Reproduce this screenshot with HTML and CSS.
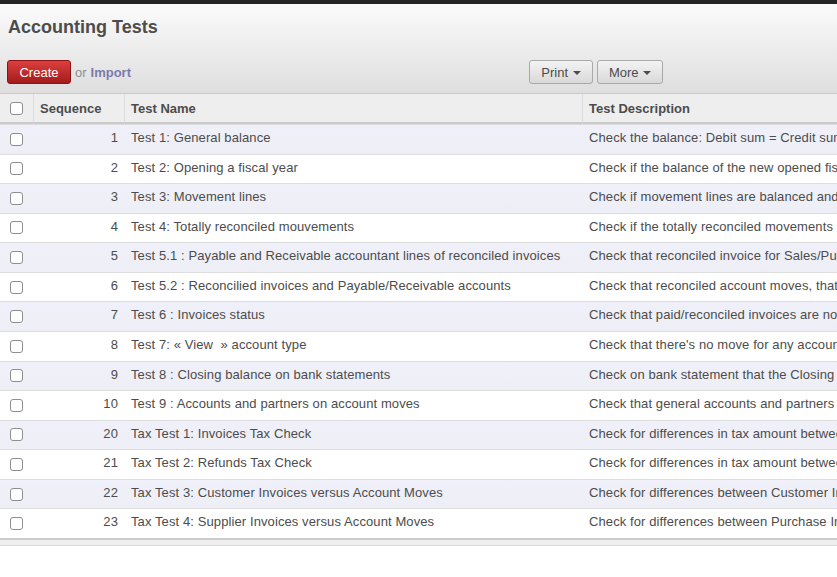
FILE: index.html
```html
<!DOCTYPE html>
<html>
<head>
<meta charset="utf-8">
<title>Accounting Tests</title>
<link rel="stylesheet" href="styles.css">
</head>
<body>
<div class="topbar"></div>
<div class="vm-header">
  <h2 class="title">Accounting Tests</h2>
  <div class="actions">
    <div class="left-actions">
      <button class="btn btn-primary">Create</button>
      <span class="or">or</span>
      <a class="import">Import</a>
    </div>
    <div class="sidebar">
      <button class="btn btn-default">Print <span class="caret"></span></button>
      <button class="btn btn-default">More <span class="caret"></span></button>
    </div>
  </div>
</div>
<table class="list">
  <colgroup>
    <col class="c-check">
    <col class="c-seq">
    <col class="c-name">
    <col class="c-desc">
  </colgroup>
  <thead>
    <tr>
      <th class="check"><input type="checkbox" class="cb"></th>
      <th class="bl">Sequence</th>
      <th class="bl">Test Name</th>
      <th class="bl">Test Description</th>
    </tr>
  </thead>
  <tbody>
    <tr><td class="check"><input type="checkbox" class="cb"></td><td class="num">1</td><td>Test 1: General balance</td><td>Check the balance: Debit sum = Credit sum</td></tr>
    <tr><td class="check"><input type="checkbox" class="cb"></td><td class="num">2</td><td>Test 2: Opening a fiscal year</td><td>Check if the balance of the new opened fiscal year matches with last year's balance</td></tr>
    <tr><td class="check"><input type="checkbox" class="cb"></td><td class="num">3</td><td>Test 3: Movement lines</td><td>Check if movement lines are balanced and have the same date and period</td></tr>
    <tr><td class="check"><input type="checkbox" class="cb"></td><td class="num">4</td><td>Test 4: Totally reconciled mouvements</td><td>Check if the totally reconciled movements are balanced</td></tr>
    <tr><td class="check"><input type="checkbox" class="cb"></td><td class="num">5</td><td>Test 5.1 : Payable and Receivable accountant lines of reconciled invoices</td><td>Check that reconciled invoice for Sales/Purchases has reconciled entries for Payable and Receivable Accounts</td></tr>
    <tr><td class="check"><input type="checkbox" class="cb"></td><td class="num">6</td><td>Test 5.2 : Reconcilied invoices and Payable/Receivable accounts</td><td>Check that reconciled account moves, that define Payable and Receivable accounts, are belonging to reconciled invoices</td></tr>
    <tr><td class="check"><input type="checkbox" class="cb"></td><td class="num">7</td><td>Test 6 : Invoices status</td><td>Check that paid/reconciled invoices are not in 'Open' state</td></tr>
    <tr><td class="check"><input type="checkbox" class="cb"></td><td class="num">8</td><td>Test 7: « View&nbsp; » account type</td><td>Check that there's no move for any account with « View » account type</td></tr>
    <tr><td class="check"><input type="checkbox" class="cb"></td><td class="num">9</td><td>Test 8 : Closing balance on bank statements</td><td>Check on bank statement that the Closing Balance = Starting Balance + sum of statement lines</td></tr>
    <tr><td class="check"><input type="checkbox" class="cb"></td><td class="num">10</td><td>Test 9 : Accounts and partners on account moves</td><td>Check that general accounts and partners on account moves are active</td></tr>
    <tr><td class="check"><input type="checkbox" class="cb"></td><td class="num">20</td><td>Tax Test 1: Invoices Tax Check</td><td>Check for differences in tax amount between invoice and invoice tax</td></tr>
    <tr><td class="check"><input type="checkbox" class="cb"></td><td class="num">21</td><td>Tax Test 2: Refunds Tax Check</td><td>Check for differences in tax amount between refunds and refund tax</td></tr>
    <tr><td class="check"><input type="checkbox" class="cb"></td><td class="num">22</td><td>Tax Test 3: Customer Invoices versus Account Moves</td><td>Check for differences between Customer Invoices and Account Moves</td></tr>
    <tr><td class="check"><input type="checkbox" class="cb"></td><td class="num">23</td><td>Tax Test 4: Supplier Invoices versus Account Moves</td><td>Check for differences between Purchase Invoices and Account Moves</td></tr>
  </tbody>
  <tfoot>
    <tr><td colspan="4" class="foot"></td></tr>
  </tfoot>
</table>
</body>
</html>
```
FILE: styles.css
```css
html, body {
  margin: 0;
  padding: 0;
  background: #ffffff;
  overflow: hidden;
}
body {
  font-family: "Liberation Sans", Arial, sans-serif;
  font-size: 13px;
  color: #4c4c4c;
  width: 837px;
  height: 577px;
}
.topbar {
  height: 4px;
  background: #262626;
}
.vm-header {
  background: linear-gradient(to bottom, #fbfbfb, #dedede);
  border-bottom: 1px solid #cacaca;
  padding: 12px 0 9px 0;
}
.title {
  margin: 0 0 0 8px;
  font-size: 18px;
  line-height: 22px;
  font-weight: bold;
  color: #4c4c4c;
}
.actions {
  margin-top: 22px;
  display: grid;
  grid-template-columns: 529px auto;
  align-items: center;
}
.left-actions {
  display: flex;
  align-items: center;
  padding-left: 7px;
}
.sidebar {
  display: flex;
  gap: 4px;
}
.btn {
  font-family: "Liberation Sans", Arial, sans-serif;
  font-size: 13px;
  height: 24px;
  line-height: 20px;
  padding-top: 2px;
  padding-bottom: 0;
  border-radius: 3px;
  margin: 0;
  cursor: pointer;
}
.btn-primary {
  width: 64px;
  padding-left: 0;
  padding-right: 0;
  color: #ffffff;
  background: linear-gradient(to bottom, #dc3f3f, #a41b1b);
  border: 1px solid #8d1414;
}
.btn-default {
  color: #4c4c4c;
  background: linear-gradient(to bottom, #f3f3f3, #d9d9d9);
  border: 1px solid #a9a9a9;
  padding-left: 0;
  padding-right: 0;
}
.btn-default:first-child { width: 64px; }
.btn-default:last-child { width: 66px; }
.caret {
  display: inline-block;
  width: 0;
  height: 0;
  margin-left: 1px;
  vertical-align: 2px;
  border-top: 4px solid #4c4c4c;
  border-left: 4px solid transparent;
  border-right: 4px solid transparent;
}
.or {
  color: #8f8f8f;
  margin-left: 4px;
}
.import {
  color: #7c7bad;
  font-weight: bold;
  margin-left: 4px;
}
.list {
  table-layout: fixed;
  width: 1182px;
  border-collapse: separate;
  border-spacing: 0;
}
.c-check { width: 33px; }
.c-seq { width: 91px; }
.c-name { width: 458px; }
.c-desc { width: 600px; }
.list th {
  background: #eeeeee;
  border-bottom: 2px solid #cacaca;
  padding: 6px 6px 4px 6px;
  line-height: 18px;
  text-align: left;
  font-weight: bold;
  white-space: nowrap;
  overflow: hidden;
}
.list th.bl {
  border-left: 1px solid #dcdcdc;
}
.list th.check,
.list td.check {
  text-align: center;
  vertical-align: middle;
  padding: 0;
}
.list td {
  border-top: 1px solid #dddddd;
  padding: 4px 6px 6px 7px;
  line-height: 18.57px;
  letter-spacing: 0.1px;
  white-space: nowrap;
  overflow: hidden;
  vertical-align: top;
}
.list td.num {
  text-align: right;
  padding-right: 6px;
}
.list tbody tr:nth-child(odd) {
  background: linear-gradient(to bottom, #f0f0fa, #eeeef6);
}
.list tbody tr:nth-child(even) {
  background: #ffffff;
}
.cb {
  appearance: none;
  -webkit-appearance: none;
  display: block;
  margin: 0 auto;
  width: 13px;
  height: 13px;
  border: 1px solid #8e8e8e;
  border-radius: 3px;
  background: #ffffff;
}
.list td.foot {
  border-top: 2px solid #cacaca;
  border-bottom: 1px solid #dddddd;
  background: #eeeeee;
  height: 5px;
  padding: 0;
  line-height: 0;
}
```
